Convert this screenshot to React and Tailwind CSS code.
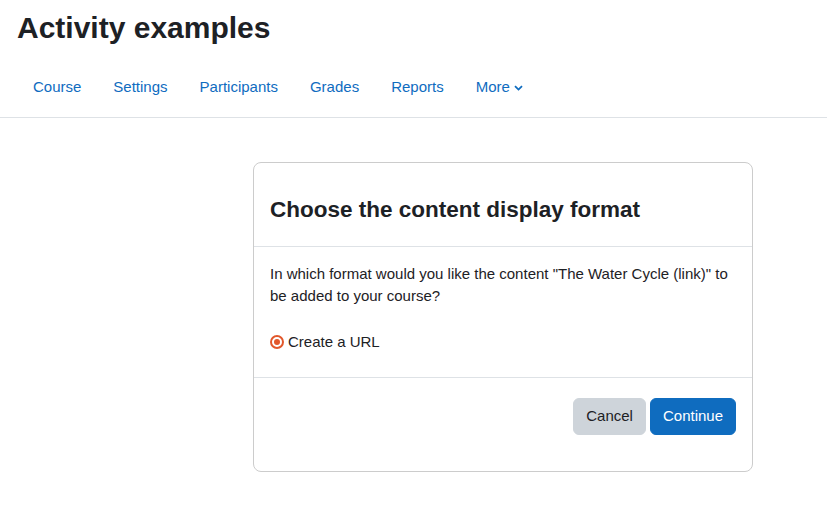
export default function App() {
  const nav = ["Course", "Settings", "Participants", "Grades", "Reports"];
  return (
    <div className="min-h-[513px] bg-white text-[#1d2125]" style={{ fontFamily: '"Liberation Sans", Arial, sans-serif' }}>
      <div className="px-[17px] pt-[10px]">
        <h1 className="text-[30px] font-bold leading-[36px]">Activity examples</h1>
        <nav className="mt-[22px] flex text-[15px] leading-[22.5px] text-[#0f6cbf]">
          {nav.map((n) => (
            <a key={n} className="px-4 py-2">{n}</a>
          ))}
          <a className="flex items-center gap-[4px] px-4 py-2">
            More
            <svg width="9" height="6" viewBox="0 0 9 6" className="mt-[2px]">
              <path d="M1 1.2 L4.5 4.6 L8 1.2" fill="none" stroke="#0f6cbf" strokeWidth="1.8" />
            </svg>
          </a>
        </nav>
      </div>
      <div className="mt-[10px] border-t border-[#dee2e6]" />
      <div className="ml-[253px] mt-[44px] w-[500px] rounded-lg border border-[#cccccc]">
        <div className="border-b border-[#dee2e6] px-4 pt-[33px] pb-[23px]">
          <h4 className="text-[22.5px] font-bold leading-[27px]">Choose the content display format</h4>
        </div>
        <div className="px-4 pt-4 pb-[24px] text-[15px] leading-[22.5px]">
          <p className="mb-[23px]">In which format would you like the content "The Water Cycle (link)" to be added to your course?</p>
          <label className="flex items-center gap-[4px]">
            <span className="flex h-[14px] w-[14px] items-center justify-center rounded-full border-[2px] border-[#e2572b]">
              <span className="h-[6px] w-[6px] rounded-full bg-[#e2572b]" />
            </span>
            Create a URL
          </label>
        </div>
        <div className="flex justify-end gap-[4px] border-t border-[#dee2e6] px-4 pt-[20px] pb-[36px] text-[15px] leading-[22.5px]">
          <button className="h-[37px] rounded-md border border-[#ced4da] bg-[#ced4da] px-3 text-[#1d2125]">Cancel</button>
          <button className="h-[37px] rounded-md border border-[#0f6cbf] bg-[#0f6cbf] px-3 text-white">Continue</button>
        </div>
      </div>
    </div>
  );
}
